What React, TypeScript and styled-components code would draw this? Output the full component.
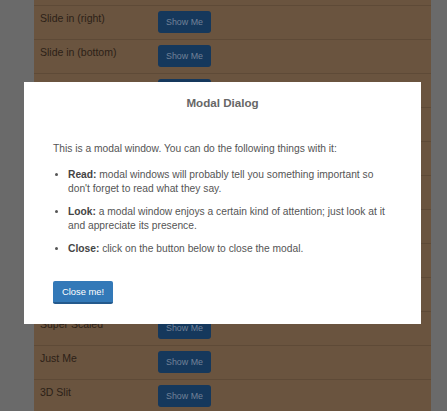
import styled, { createGlobalStyle } from 'styled-components';

const GlobalStyle = createGlobalStyle`
    html, body {
        margin: 0;
        padding: 0;
        background: #6a6a6a;
        font-family: "Liberation Sans", Arial, sans-serif;
    }
`;

const Page = styled.div`
    position: relative;
    width: 447px;
    height: 411px;
    overflow: hidden;
    background: #6a6a6a;
`;

const Panel = styled.div`
    width: 397px;
    margin: -29px 0 0 34px;
    background: #6a543f;
`;

const Row = styled.div`
    display: flex;
    height: 33px;
    border-top: 1px solid #5e4a37;
`;

const Label = styled.div`
    width: 118px;
    padding: 5px 0 0 6px;
    font-size: 10.5px;
    line-height: 14px;
    color: #2c2117;
`;

const ShowButton = styled.button`
    width: 53px;
    height: 22px;
    margin-top: 5px;
    padding: 0;
    border: none;
    border-radius: 3px;
    background: #15385c;
    color: #728298;
    font-family: inherit;
    font-size: 8.9px;
`;

const Modal = styled.div`
    position: absolute;
    left: 24px;
    top: 82px;
    width: 397px;
    height: 242px;
    background: #fff;
`;

const Title = styled.h3`
    margin: 0;
    padding-top: 14px;
    font-size: 11.6px;
    line-height: 14px;
    font-weight: bold;
    text-align: center;
    color: #666;
`;

const Content = styled.div`
    padding: 0 29px;
    font-size: 10.25px;
    line-height: 14px;
    color: #555;
`;

const Intro = styled.p`
    margin: 32px 0 0;
`;

const List = styled.ul`
    margin: 12px 0 0;
    padding-left: 15px;
    & > li {
        margin-bottom: 9px;
    }
    & > li:last-child {
        margin-bottom: 0;
    }
    & b {
        color: #444;
    }
`;

const CloseButton = styled.button`
    display: block;
    width: 60px;
    height: 23px;
    margin-top: 25px;
    padding: 0;
    border: none;
    border-bottom: 2px solid #245a8d;
    border-radius: 2px;
    background: #3379b8;
    color: #fff;
    font-family: inherit;
    font-size: 9.4px;
`;

const effects = [
    'Fade in & Scale',
    'Slide in (right)',
    'Slide in (bottom)',
    'Newspaper',
    'Fall',
    'Side Fall',
    'Sticky Up',
    '3D Flip (horizontal)',
    '3D Flip (vertical)',
    '3D Sign',
    'Super Scaled',
    'Just Me',
    '3D Slit',
    '3D Rotate Bottom',
];

const App = () => {
    return (
        <Page>
            <GlobalStyle />
            <Panel>
                {
                    effects.map((name) => {
                        return (
                            <Row key={name}>
                                <Label>{name}</Label>
                                <ShowButton>Show Me</ShowButton>
                            </Row>
                        );
                    })
                }
            </Panel>
            <Modal>
                <Title>Modal Dialog</Title>
                <Content>
                    <Intro>This is a modal window. You can do the following things with it:</Intro>
                    <List>
                        <li><b>Read:</b> modal windows will probably tell you something important so don't forget to read what they say.</li>
                        <li><b>Look:</b> a modal window enjoys a certain kind of attention; just look at it and appreciate its presence.</li>
                        <li><b>Close:</b> click on the button below to close the modal.</li>
                    </List>
                    <CloseButton>Close me!</CloseButton>
                </Content>
            </Modal>
        </Page>
    );
};

export default App;
